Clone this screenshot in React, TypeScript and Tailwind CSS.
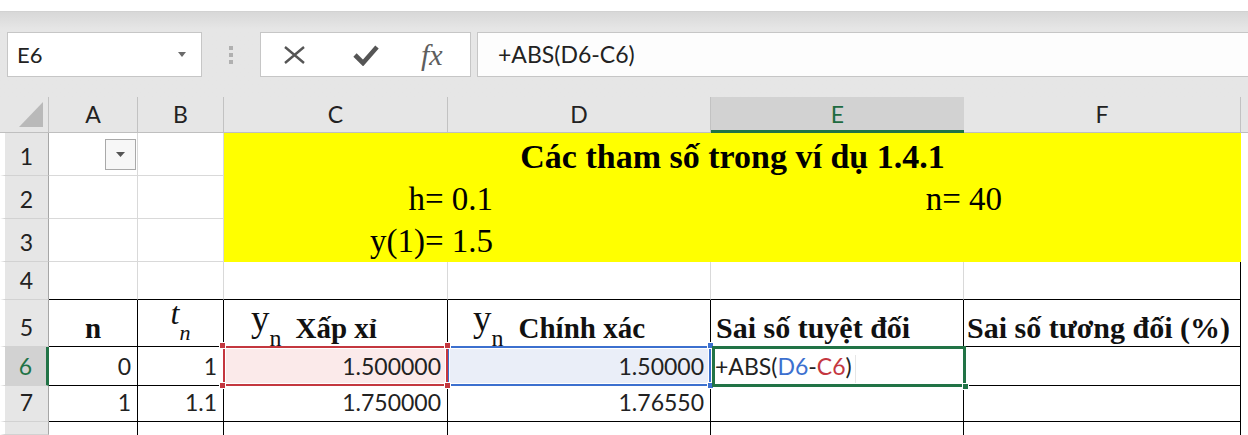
import React from 'react';

// Excel-like sheet: formula bar + grid with a merged yellow parameter block

const SERIF = "font-['Liberation_Serif',serif]";

const COLUMNS = [
  { label: 'A', active: false },
  { label: 'B', active: false },
  { label: 'C', active: false },
  { label: 'D', active: false },
  { label: 'E', active: true },
  { label: 'F', active: false },
];

function FormulaBar() {
  return (
    <div className="h-[86px] border-t border-[#d2d2d2] bg-linear-to-b from-[#d8d8d8] to-[#e6e6e6] to-20% flex items-start pt-[20px] pl-[7px]">
      {/* Name box */}
      <div className="w-[195px] h-[45px] border border-[#c6c6c6] bg-white flex items-center justify-between pl-[9px] pr-[15px]">
        <span className="text-[22px] leading-none text-[#222]">E6</span>
        <svg width="8" height="5" viewBox="0 0 8 5">
          <path d="M0 0 L8 0 L4 5 Z" fill="#6a6a6a" />
        </svg>
      </div>

      {/* Grip dots */}
      <div className="w-[58px] h-[45px] flex flex-col items-center justify-center gap-[3px]">
        <div className="w-[4px] h-[4px] bg-[#b0b0b0]" />
        <div className="w-[4px] h-[4px] bg-[#b0b0b0]" />
        <div className="w-[4px] h-[4px] bg-[#b0b0b0]" />
      </div>

      {/* Cancel / Enter / Insert function */}
      <div className="w-[211px] h-[45px] border border-[#c6c6c6] bg-white flex items-center pl-[22px]">
        <svg width="23" height="18" viewBox="0 0 23 18">
          <path d="M2 1 L21 17 M21 1 L2 17" stroke="#555" strokeWidth="2.4" />
        </svg>
        <svg className="ml-[47px]" width="26" height="22" viewBox="0 0 26 22">
          <path d="M2 11 L10 19 L24 3" stroke="#555" strokeWidth="4.6" fill="none" />
        </svg>
        <span className={`${SERIF} ml-[42px] italic text-[30px] leading-none text-[#5e5e5e]`}>fx</span>
      </div>

      {/* Formula input */}
      <div className="ml-[6px] flex-1 h-[45px] border-y border-l border-[#c6c6c6] bg-[#fdfdfd] flex items-center pl-[20px]">
        <span className="text-[23px] leading-none text-[#222]">+ABS(D6-C6)</span>
      </div>
    </div>
  );
}

function RowHead({ n, active }: { n?: number; active?: boolean }) {
  return (
    <div
      className={`flex items-end justify-center pb-[7px] leading-none text-[23px] border-l-[5px] border-l-white border-b border-b-[#d2d2d2] ${
        active
          ? 'bg-[#d2d2d2] text-[#217346] border-r-[3px] border-r-[#217346]'
          : 'bg-[#e6e6e6] text-[#222] border-r border-r-[#a6a6a6]'
      }`}
    >
      {n}
    </div>
  );
}

const grid = 'border-r border-b border-[#d9d9d9]';
const edge = 'border-r border-r-[#d9d9d9] border-b border-b-black';
const table = 'border-r border-b border-black';
const num = 'flex items-end justify-end pr-[6px] pb-[7px] leading-none text-[23px] text-[#222]';
const head = `${SERIF} flex items-end pb-[3px] leading-none text-[#111]`;

function Handle({ pos, color }: { pos: string; color: string }) {
  return <div className={`absolute w-[7px] h-[7px] border border-white ${pos} ${color}`} />;
}

function Sheet() {
  return (
    <div className="grid grid-cols-[49px_89px_86px_224px_263px_253px_277px_7px] grid-rows-[36px_43px_43px_43px_38px_47px_39px_36px_13px]">
      {/* Column headers */}
      <div className="bg-[#e6e6e6] border-r border-r-[#c2c2c2] border-b border-b-[#bfbfbf] flex items-end justify-end pr-[5px] pb-[5px]">
        <svg width="24" height="25" viewBox="0 0 24 25">
          <path d="M24 0 L24 25 L0 25 Z" fill="#b9b9b9" />
        </svg>
      </div>
      {COLUMNS.map((c) => (
        <div
          key={c.label}
          className={`flex items-end justify-center leading-none text-[23px] ${
            c.active
              ? 'bg-[#d2d2d2] text-[#1e6b41] border-b-[3px] border-b-[#217346] pb-[4px]'
              : 'bg-[#e6e6e6] text-[#222] border-r border-r-[#c2c2c2] border-b border-b-[#bfbfbf] pb-[6px]'
          }`}
        >
          {c.label}
        </div>
      ))}
      <div className="bg-[#e6e6e6] border-b border-b-[#bfbfbf]" />

      {/* Row 1 */}
      <RowHead n={1} />
      <div className={`${grid} flex items-center justify-end pr-px`}>
        <div className="w-[31px] h-[31px] border border-[#a9a9a9] bg-[#f7f7f7] flex items-center justify-center">
          <svg width="9" height="5" viewBox="0 0 9 5">
            <path d="M0 0 L9 0 L4.5 5 Z" fill="#555" />
          </svg>
        </div>
      </div>
      <div className={grid} />
      <div className="col-span-4 row-span-3 bg-[#ffff00] grid grid-rows-[43px_43px_43px] grid-cols-[269px_509px_1fr]">
        <div className={`${SERIF} col-span-3 flex items-end justify-center pb-[2px] leading-none font-bold text-[34px] text-black`}>
          Các tham số trong ví dụ 1.4.1
        </div>
        <div className={`${SERIF} flex items-end justify-end pb-[3px] leading-none text-[33px] text-black`}>h= 0.1</div>
        <div className={`${SERIF} flex items-end justify-end pb-[3px] leading-none text-[33px] text-black`}>n= 40</div>
        <div />
        <div className={`${SERIF} flex items-end justify-end pb-[4px] leading-none text-[33px] text-black`}>y(1)= 1.5</div>
        <div />
        <div />
      </div>
      <div />

      {/* Row 2 */}
      <RowHead n={2} />
      <div className={grid} />
      <div className={grid} />
      <div />

      {/* Row 3 */}
      <RowHead n={3} />
      <div className={grid} />
      <div className={grid} />
      <div />

      {/* Row 4 */}
      <RowHead n={4} />
      <div className={edge} />
      <div className={edge} />
      <div className={edge} />
      <div className={edge} />
      <div className={edge} />
      <div className="border-r border-r-black border-b border-b-black" />
      <div />

      {/* Row 5: table header */}
      <RowHead n={5} />
      <div className={`${table} ${head} justify-center font-bold text-[29px]`}>n</div>
      <div className={`${table} ${SERIF} flex justify-center text-[#111]`}>
        <span className="self-start mt-[-3px] leading-none italic text-[32px]">t</span>
        <span className="self-end mb-[2px] leading-none italic text-[22px]">n</span>
      </div>
      <div className={`${table} ${SERIF} flex items-end pl-[27px] text-[#111]`}>
        <span className="mb-[9px] leading-none text-[37px]">y</span>
        <span className="mb-[-4px] leading-none text-[24px]">n</span>
        <span className="ml-[14px] mb-[3px] leading-none font-bold text-[29px]">Xấp xỉ</span>
      </div>
      <div className={`${table} ${SERIF} flex items-end pl-[25px] text-[#111]`}>
        <span className="mb-[9px] leading-none text-[37px]">y</span>
        <span className="mb-[-4px] leading-none text-[24px]">n</span>
        <span className="ml-[15px] mb-[3px] leading-none font-bold text-[29px]">Chính xác</span>
      </div>
      <div className={`${table} ${head} pl-[5px] font-bold text-[30px]`}>Sai số tuyệt đối</div>
      <div className={`${table} ${head} pl-[3px] font-bold text-[30px]`}>Sai số tương đối (%)</div>
      <div />

      {/* Row 6 */}
      <RowHead n={6} active />
      <div className={`${table} ${num}`}>0</div>
      <div className={`${table} ${num}`}>1</div>
      <div className={`${table} ${num} relative bg-[#fbeaea]`}>
        1.500000
        <div className="absolute -inset-px z-10 border-2 border-[#c4373f] shadow-[inset_0_0_0_1px_#fff]" />
        <Handle pos="z-10 -left-[5px] -top-[5px]" color="bg-[#c4373f]" />
        <Handle pos="z-10 -right-[4px] -top-[5px]" color="bg-[#c4373f]" />
        <Handle pos="z-10 -left-[5px] -bottom-[4px]" color="bg-[#c4373f]" />
        <Handle pos="z-10 -right-[4px] -bottom-[4px]" color="bg-[#c4373f]" />
      </div>
      <div className={`${table} ${num} relative bg-[#eaeef8]`}>
        1.50000
        <div className="absolute -inset-px border-2 border-[#3c70cf] shadow-[inset_0_0_0_1px_#fff]" />
        <Handle pos="z-[5] -right-[4px] -top-[5px]" color="bg-[#3c70cf]" />
        <Handle pos="z-[5] -right-[4px] -bottom-[4px]" color="bg-[#3c70cf]" />
      </div>
      <div className={`${table} relative flex items-end pl-[4px] pb-[7px] leading-none text-[23px] text-[#222]`}>
        <span className="pr-[3px] border-r border-[#e6e6e6] -mb-[5px] pb-[5px]">
          +ABS(<span className="text-[#3c70cf]">D6</span>-<span className="text-[#c4373f]">C6</span>)
        </span>
        <div className="absolute left-px -top-px -right-[3px] -bottom-[2px] z-20 border-[3px] border-[#217346]" />
        <div className="absolute z-20 -right-[6px] -bottom-[5px] w-[7px] h-[7px] bg-[#217346] border border-white" />
      </div>
      <div className={table} />
      <div />

      {/* Row 7 */}
      <RowHead n={7} />
      <div className={`${table} ${num}`}>1</div>
      <div className={`${table} ${num}`}>1.1</div>
      <div className={`${table} ${num}`}>1.750000</div>
      <div className={`${table} ${num}`}>1.76550</div>
      <div className={table} />
      <div className={table} />
      <div />

      {/* Row 8 (cut off) */}
      <RowHead />
      <div className="border-r border-black" />
      <div className="border-r border-black" />
      <div className="border-r border-black" />
      <div className="border-r border-black" />
      <div className="border-r border-black" />
      <div className="border-r border-black" />
      <div />
    </div>
  );
}

export default function App() {
  return (
    <div className="w-[1248px] h-[435px] overflow-hidden bg-white font-['Lato',sans-serif]">
      <div className="h-[11px] bg-white" />
      <FormulaBar />
      <Sheet />
    </div>
  );
}
